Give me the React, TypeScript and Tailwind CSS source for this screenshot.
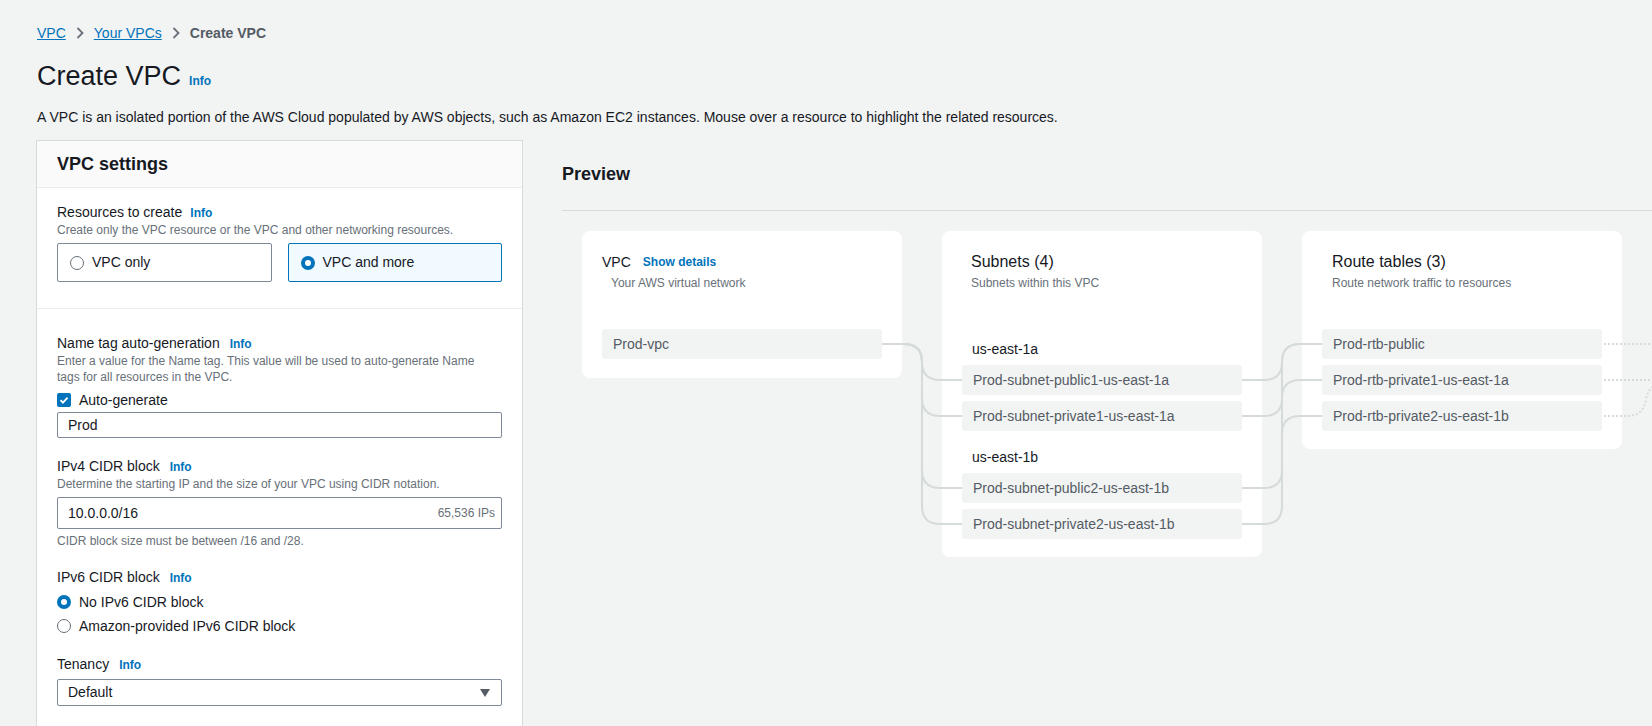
import React from 'react';

// Small shared bits used across the form and preview
function Info({ className = '' }: { className?: string }) {
  return <a className={`cursor-pointer text-[12px] font-bold leading-4 text-[#0073bb] ${className}`}>Info</a>;
}

function Chevron() {
  return (
    <svg width="8" height="12" viewBox="0 0 8 12" className="shrink-0">
      <path d="M1.5 1l5 5-5 5" fill="none" stroke="#687078" strokeWidth="1.8" />
    </svg>
  );
}

function Radio({ checked }: { checked?: boolean }) {
  return checked ? (
    <span className="h-[14px] w-[14px] shrink-0 rounded-full border-[4px] border-[#0073bb] bg-white" />
  ) : (
    <span className="h-[14px] w-[14px] shrink-0 rounded-full border-[1.5px] border-[#687078] bg-white" />
  );
}

function Label({ text, infoClass = 'ml-[10px]' }: { text: string; infoClass?: string }) {
  return (
    <div className="flex h-5 items-baseline text-[14px] leading-5">
      <span>{text}</span>
      <Info className={infoClass} />
    </div>
  );
}

function Row({ text }: { text: string }) {
  return (
    <div className="flex h-[30px] items-center rounded-[3px] bg-[#f2f3f3] px-[11px] text-[14px] text-[#545b64]">
      {text}
    </div>
  );
}

// path helpers for the diagram connectors (coords relative to the first card)
const down = (x1: number, y1: number, xm: number, y2: number, x2: number, r = 18) =>
  `M${x1} ${y1} H${xm - r} Q${xm} ${y1} ${xm} ${y1 + r} V${y2 - r} Q${xm} ${y2} ${xm + r} ${y2} H${x2}`;
const up = (x1: number, y1: number, xm: number, y2: number, x2: number, r = 18) =>
  `M${x1} ${y1} H${xm - r} Q${xm} ${y1} ${xm} ${y1 - r} V${y2 + r} Q${xm} ${y2} ${xm + r} ${y2} H${x2}`;

const subnetYs = [149, 185, 257, 293];
const subnetToRoute: [number, number][] = [
  [149, 113],
  [185, 149],
  [257, 113],
  [293, 185],
];

export default function App() {
  return (
    <div className="min-h-screen w-full overflow-hidden bg-[#f2f3f3] font-['Liberation_Sans',Arial,sans-serif] text-[#16191f]">
      <div className="pl-[37px] pt-[22px]">
        {/* breadcrumb */}
        <nav className="flex h-[22px] items-center gap-[10px] text-[14px]">
          <a className="text-[#0073bb] underline">VPC</a>
          <Chevron />
          <a className="text-[#0073bb] underline">Your VPCs</a>
          <Chevron />
          <span className="font-bold text-[#545b64]">Create VPC</span>
        </nav>
        <div className="mt-[14px] flex h-9 items-baseline">
          <h1 className="text-[27px] leading-9">Create VPC</h1>
          <Info className="ml-2" />
        </div>
        <p className="mt-[13px] text-[14px] leading-5">
          A VPC is an isolated portion of the AWS Cloud populated by AWS objects, such as Amazon EC2 instances. Mouse over a
          resource to highlight the related resources.
        </p>
      </div>

      <div className="mt-[13px] flex pl-[36px]">
        {/* settings panel */}
        <div className="w-[487px] shrink-0 border border-[#d5dbdb] bg-white pb-[40px]">
          <div className="flex h-[47px] items-center border-b border-[#eaeded] bg-[#fafafa] px-5">
            <h2 className="text-[18px] font-bold">VPC settings</h2>
          </div>

          <div className="border-b border-[#eaeded] px-5 pb-[26px] pt-[14px]">
            <Label text="Resources to create" infoClass="ml-2" />
            <p className="text-[12px] leading-4 text-[#687078]">
              Create only the VPC resource or the VPC and other networking resources.
            </p>
            <div className="mt-[5px] flex gap-4">
              <div className="flex h-[39px] flex-1 items-center gap-2 rounded-[2px] border border-[#7d8998] px-3 text-[14px]">
                <Radio />
                <span>VPC only</span>
              </div>
              <div className="flex h-[39px] flex-1 items-center gap-2 rounded-[2px] border border-[#0073bb] bg-[#f1faff] px-3 text-[14px]">
                <Radio checked />
                <span>VPC and more</span>
              </div>
            </div>
          </div>

          <div className="px-5 pt-6">
            <Label text="Name tag auto-generation" />
            <p className="text-[12px] leading-4 text-[#687078]">
              Enter a value for the Name tag. This value will be used to auto-generate Name
              <br />
              tags for all resources in the VPC.
            </p>
            <div className="mt-[5px] flex h-5 items-center gap-2 text-[14px]">
              <span className="flex h-[14px] w-[14px] items-center justify-center rounded-[2px] bg-[#0073bb]">
                <svg width="10" height="10" viewBox="0 0 10 10">
                  <path d="M1.5 5.2l2.4 2.4L8.6 2.6" fill="none" stroke="#fff" strokeWidth="1.8" />
                </svg>
              </span>
              <span>Auto-generate</span>
            </div>
            <div className="mt-[2px] flex h-[26px] items-center rounded-[2px] border border-[#7d8998] px-[10px] text-[14px]">
              Prod
            </div>

            <div className="mt-[18px]">
              <Label text="IPv4 CIDR block" />
            </div>
            <p className="text-[12px] leading-4 text-[#687078]">
              Determine the starting IP and the size of your VPC using CIDR notation.
            </p>
            <div className="mt-[5px] flex h-[32px] items-center justify-between rounded-[2px] border border-[#7d8998] pl-[10px] pr-[6px] text-[14px]">
              <span>10.0.0.0/16</span>
              <span className="text-[12px] text-[#687078]">65,536 IPs</span>
            </div>
            <p className="mt-[4px] text-[12px] leading-4 text-[#687078]">CIDR block size must be between /16 and /28.</p>

            <div className="mt-[18px]">
              <Label text="IPv6 CIDR block" />
            </div>
            <div className="mt-[5px] flex h-5 items-center gap-2 text-[14px]">
              <Radio checked />
              <span>No IPv6 CIDR block</span>
            </div>
            <div className="mt-1 flex h-5 items-center gap-2 text-[14px]">
              <Radio />
              <span>Amazon-provided IPv6 CIDR block</span>
            </div>

            <div className="mt-[18px]">
              <Label text="Tenancy" />
            </div>
            <div className="mt-[5px] flex h-[27px] items-center justify-between rounded-[2px] border border-[#7d8998] pl-[10px] pr-[11px] text-[14px]">
              <span>Default</span>
              <svg width="10" height="8" viewBox="0 0 10 8">
                <path d="M0 0h10L5 8z" fill="#545b64" />
              </svg>
            </div>
          </div>
        </div>

        {/* preview */}
        <div className="ml-[39px] min-w-0 flex-1 overflow-hidden">
          <div className="border-b border-[#d5dbdb] pb-[22px] pt-5">
            <h2 className="text-[18px] font-bold leading-7">Preview</h2>
          </div>

          <div className="relative mt-5 flex items-start gap-10 pl-5">
            <div className="w-[320px] shrink-0 rounded-lg bg-white px-5 pb-[19px] pt-5">
              <div className="flex h-[22px] items-center">
                <span className="text-[14px]">VPC</span>
                <a className="ml-3 text-[12px] font-bold text-[#0073bb]">Show details</a>
              </div>
              <p className="mt-[2px] pl-[9px] text-[12px] leading-4 text-[#687078]">Your AWS virtual network</p>
              <div className="mt-[38px]">
                <Row text="Prod-vpc" />
              </div>
            </div>

            <div className="w-[320px] shrink-0 rounded-lg bg-white px-5 pb-[18px] pt-5">
              <div className="pl-[9px]">
                <div className="flex h-[22px] items-center text-[16px]">Subnets (4)</div>
                <p className="mt-[2px] text-[12px] leading-4 text-[#687078]">Subnets within this VPC</p>
              </div>
              <div className="mt-[48px] pl-[10px] text-[14px] leading-5">us-east-1a</div>
              <div className="mt-[6px] flex flex-col gap-[6px]">
                <Row text="Prod-subnet-public1-us-east-1a" />
                <Row text="Prod-subnet-private1-us-east-1a" />
              </div>
              <div className="mt-4 pl-[10px] text-[14px] leading-5">us-east-1b</div>
              <div className="mt-[6px] flex flex-col gap-[6px]">
                <Row text="Prod-subnet-public2-us-east-1b" />
                <Row text="Prod-subnet-private2-us-east-1b" />
              </div>
            </div>

            <div className="w-[320px] shrink-0 rounded-lg bg-white px-5 pb-[18px] pt-5">
              <div className="pl-[10px]">
                <div className="flex h-[22px] items-center text-[16px]">Route tables (3)</div>
                <p className="mt-[2px] text-[12px] leading-4 text-[#687078]">Route network traffic to resources</p>
              </div>
              <div className="mt-[38px] flex flex-col gap-[6px]">
                <Row text="Prod-rtb-public" />
                <Row text="Prod-rtb-private1-us-east-1a" />
                <Row text="Prod-rtb-private2-us-east-1b" />
              </div>
            </div>

            <svg
              className="pointer-events-none absolute left-5 top-0 overflow-visible"
              width="1100"
              height="330"
              fill="none"
            >
              <g stroke="#d5dbdb" strokeWidth="2">
                {subnetYs.map((y) => (
                  <path key={y} d={down(300, 113, 340, y, 380)} />
                ))}
                {subnetToRoute.map(([a, b]) => (
                  <path key={a} d={up(660, a, 700, b, 740)} />
                ))}
              </g>
              <g stroke="#d5dbdb" strokeWidth="2" strokeDasharray="2 2">
                <path d="M1022 113 H1100" />
                <path d="M1022 149 H1100" />
                <path d="M1022 185 H1045 Q1062 185 1064 168 Q1068 150 1090 149" />
              </g>
            </svg>
          </div>
        </div>
      </div>
    </div>
  );
}
